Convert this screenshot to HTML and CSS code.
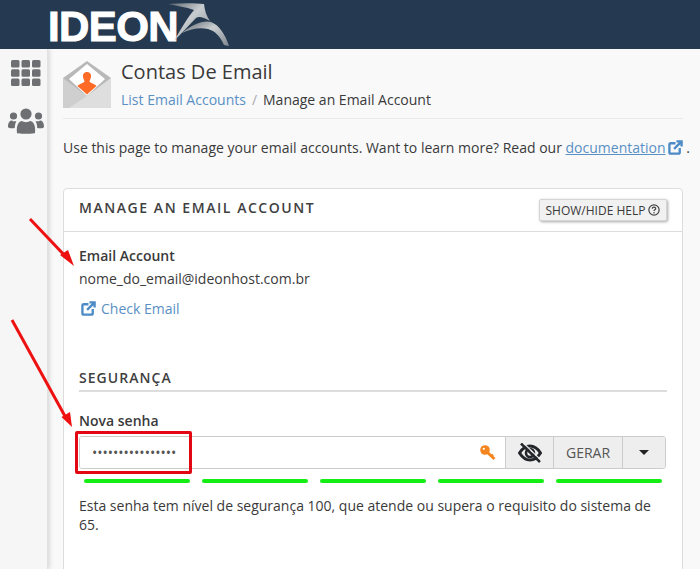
FILE: index.html
```html
<!DOCTYPE html>
<html lang="pt">
<head>
<meta charset="utf-8">
<title>Contas De Email</title>
<link rel="stylesheet" href="styles.css">
</head>
<body>
<header class="topbar">
  <div class="logo">
    <span class="logo-text">IDEON</span>
    <svg class="logo-bird" viewBox="0 0 66 46" width="66" height="46" aria-hidden="true">
      <defs>
        <linearGradient id="wing" x1="0" y1="0" x2="1" y2="1">
          <stop offset="0" stop-color="#59636c"/>
          <stop offset="0.45" stop-color="#c9cdd0"/>
          <stop offset="1" stop-color="#7f888f"/>
        </linearGradient>
      </defs>
      <path fill="url(#wing)" d="M1 2 C14 1 28 1 37 2 C38 9 39 13 43 19 C36 15 32 14 29 16 C22 23 15 31 7 39 C15 25 21 15 27 8 C19 5 10 4 1 2Z"/>
      <path fill="url(#wing)" d="M15 31 C26 22 36 18 44 20 C52 23 58 32 62 44 L57 43 C53 34 48 29 41 27 C32 25 24 27 15 31Z"/>
    </svg>
  </div>
</header>
<div class="shell">
  <nav class="rail">
    <svg class="rail-grid" viewBox="0 0 30 26" width="30" height="26" aria-hidden="true">
      <g fill="#6d6f72">
        <rect x="0" y="0" width="8.5" height="7.5" rx="1.5"/><rect x="10.5" y="0" width="8.5" height="7.5" rx="1.5"/><rect x="21" y="0" width="8.5" height="7.5" rx="1.5"/>
        <rect x="0" y="9.2" width="8.5" height="7.5" rx="1.5"/><rect x="10.5" y="9.2" width="8.5" height="7.5" rx="1.5"/><rect x="21" y="9.2" width="8.5" height="7.5" rx="1.5"/>
        <rect x="0" y="18.4" width="8.5" height="7.5" rx="1.5"/><rect x="10.5" y="18.4" width="8.5" height="7.5" rx="1.5"/><rect x="21" y="18.4" width="8.5" height="7.5" rx="1.5"/>
      </g>
    </svg>
    <svg class="rail-users" viewBox="0 0 36 26" width="36" height="26" aria-hidden="true">
      <g fill="#6d6f72">
        <circle cx="18" cy="6" r="5.6"/>
        <circle cx="5.5" cy="8" r="3.6"/>
        <circle cx="30.5" cy="8" r="3.6"/>
        <path d="M9 25 C8 17 11 13 14 13 C16 14.5 20 14.5 22 13 C25 13 28 17 27 25 C26 26 10 26 9 25Z"/>
        <path d="M0 19 C0 14 2 12.5 4 12.5 C5 13.5 7 13.5 8.5 13 C7.4 15 6.8 17 6.8 20 C4 20.5 0.5 20.5 0 19Z"/>
        <path d="M36 19 C36 14 34 12.5 32 12.5 C31 13.5 29 13.5 27.5 13 C28.6 15 29.2 17 29.2 20 C32 20.5 35.5 20.5 36 19Z"/>
      </g>
    </svg>
  </nav>
  <main class="content">
    <div class="page-head">
      <svg class="mail-icon" viewBox="0 0 48 48" width="48" height="48" aria-hidden="true">
        <path fill="#b8b8b8" d="M0 17 L24 0 L48 17 L48 46 Q48 47 46 47 L2 47 Q0 47 0 46Z"/>
        <path fill="#fff" d="M6 18 L24 3 L42 18 L24 35Z"/>
        <path fill="#ff6a26" d="M24 11 C27 11 28.500 13.500 28 16 C27.700 18 26.500 19.500 26.500 20.500 C27 22 32 23 33.500 25 L24 33.500 L14.500 25 C16 23 21 22 21.500 20.500 C21.500 19.500 20.300 18 20 16 C19.500 13.500 21 11 24 11Z"/>
        <path fill="#cfcfcf" d="M0 17 L24 35 L48 17 L48 46 Q48 47 46 47 L2 47 Q0 47 0 46Z"/>
        <path fill="#dedede" d="M48 17 L48 46 Q48 47 46 47 L6 47 L24 35Z"/>
      </svg>
      <div class="head-text">
        <h1 class="page-title">Contas De Email</h1>
        <div class="crumbs"><a class="link" href="#">List Email Accounts</a><span class="crumb-sep">/</span><span>Manage an Email Account</span></div>
      </div>
    </div>
    <hr class="head-rule">
    <p class="intro">Use this page to manage your email accounts. Want to learn more? Read our <a class="link underlined" href="#">documentation</a><svg class="ext ext-doc" viewBox="0 0 16 16" width="15" height="15" aria-hidden="true"><path class="ext-path" d="M8 3.500H3 Q1.500 3.500 1.500 5V13 Q1.500 14.500 3 14.500H11 Q12.500 14.500 12.500 13V8.500"/><path class="ext-path" d="M6.500 9.500L14 2M9 1.500H14.500V7"/></svg> .</p>
    <section class="panel">
      <div class="panel-head">
        <h2 class="panel-title">MANAGE AN EMAIL ACCOUNT</h2>
        <button class="help-btn" type="button">SHOW/HIDE HELP
          <svg viewBox="0 0 14 14" width="12" height="12" aria-hidden="true"><circle cx="7" cy="7" r="6" fill="none" stroke="#444" stroke-width="1.400"/><path d="M5 5.500C5 4.300 6 3.700 7 3.700S9 4.300 9 5.400C9 6.800 7 6.800 7 8.300" fill="none" stroke="#444" stroke-width="1.400"/><circle cx="7" cy="10.200" r="0.900" fill="#444"/></svg>
        </button>
      </div>
      <div class="panel-body">
        <div class="field-label">Email Account</div>
        <div class="account">nome_do_email@ideonhost.com.br</div>
        <a class="link check" href="#"><svg class="ext" viewBox="0 0 16 16" width="15" height="15" aria-hidden="true"><path class="ext-path" d="M8 3.500H3 Q1.500 3.500 1.500 5V13 Q1.500 14.500 3 14.500H11 Q12.500 14.500 12.500 13V8.500"/><path class="ext-path" d="M6.500 9.500L14 2M9 1.500H14.500V7"/></svg>Check Email</a>
        <h3 class="section-title">SEGURANÇA</h3>
        <label class="field-label pw-label" for="pw">Nova senha</label>
        <div class="pw-group">
          <div class="pw-input">
            <span class="pw-dots" id="pw">••••••••••••••••</span>
            <svg class="key" viewBox="0 0 16 16" width="16" height="16" aria-hidden="true"><circle cx="5" cy="5" r="4.800" fill="#f5861f"/><circle cx="3.800" cy="3.800" r="1.100" fill="#fff"/><path d="M7.500 7.500L14.500 14" stroke="#f5861f" stroke-width="3" fill="none"/><path d="M11 11.500L13 9.500" stroke="#f5861f" stroke-width="2.400" fill="none"/></svg>
          </div>
          <button class="addon addon-eye" type="button" aria-label="show">
            <svg viewBox="0 0 24 20" width="24" height="20" aria-hidden="true"><path d="M1.500 10C5 4.500 8.500 3 12 3S19 4.500 22.500 10C19 15.500 15.500 17 12 17S5 15.500 1.500 10Z" fill="none" stroke="#23272b" stroke-width="3"/><circle cx="12" cy="10" r="4" fill="none" stroke="#23272b" stroke-width="2.600"/><path d="M3 0.500L22 19" stroke="#23272b" stroke-width="2.600"/><path d="M5.500 0L24 18" stroke="#eee" stroke-width="1.200"/></svg>
          </button>
          <button class="addon addon-gen" type="button">GERAR</button>
          <button class="addon addon-caret" type="button" aria-label="menu"><span class="caret"></span></button>
        </div>
        <div class="meter">
          <span class="meter-bar"></span><span class="meter-bar"></span><span class="meter-bar"></span><span class="meter-bar"></span><span class="meter-bar"></span>
        </div>
        <p class="strength">Esta senha tem nível de segurança 100, que atende ou supera o requisito do sistema de 65.</p>
      </div>
    </section>
  </main>
</div>
<div class="red-box"></div>
<svg class="arrows" viewBox="0 0 700 569" width="700" height="569" aria-hidden="true">
  <path d="M30 219L68 259" stroke="#ee1111" stroke-width="3" fill="none"/>
  <path d="M74 266L60 255L68 250Z" fill="#ee1111"/>
  <path d="M12 320L66 418" stroke="#ee1111" stroke-width="3" fill="none"/>
  <path d="M72 427L61.500 417L70 412Z" fill="#ee1111"/>
</svg>
</body>
</html>
```
FILE: styles.css
```css
* { box-sizing: border-box; }
html, body { margin: 0; padding: 0; height: 569px; overflow: hidden; }
body {
  font-family: "Open Sans", "Liberation Sans", sans-serif;
  font-size: 14px;
  line-height: 20px;
  color: #3a3a3a;
  background: #f9f9fa;
  position: relative;
}
.topbar {
  height: 49px;
  background: #253a50;
  position: relative;
  z-index: 2;
  overflow: hidden;
}
.logo { display: flex; align-items: flex-start; padding-left: 48px; }
.logo-text {
  font-family: "Liberation Sans", Arial, sans-serif;
  font-weight: 700;
  font-size: 42px;
  line-height: 49px;
  letter-spacing: -0.600px;
  color: #fff;
  margin-top: 2px;
  -webkit-text-stroke: 1px #fff;
}
.logo-bird { margin-left: -11px; margin-top: 2px; }
.shell { display: flex; height: 520px; }
.rail {
  width: 48px;
  flex: none;
  background: #f6f6f7;
  border-right: 1px solid #e2e2e3;
  box-shadow: 2px 0 4px rgba(0,0,0,0.12);
  display: flex;
  flex-direction: column;
  align-items: center;
  padding-top: 11px;
}
.rail-grid { margin-left: 4px; }
.rail-users { margin-top: 22px; margin-left: 4px; }
.content { flex: 1; padding: 10px 17px 0 15px; min-width: 0; }
.page-head { display: flex; gap: 10px; height: 49px; }
.mail-icon { flex: none; margin-top: 2px; }
.page-title {
  margin: 0;
  font-size: 20px;
  font-weight: 400;
  line-height: 26px;
  color: #3a3a3a;
}
.crumbs { margin-top: 5px; line-height: 20px; color: #3a3a3a; }
.crumb-sep { color: #aaa; margin: 0 6px 0 6px; }
.link { color: #5a90c4; text-decoration: none; }
.underlined { text-decoration: underline; }
.head-rule { margin: 10px 0 0; border: 0; border-top: 1px solid #eaeaeb; }
.intro { margin: 19px 0 0; height: 20px; white-space: nowrap; }
.ext { vertical-align: -2px; }
.ext-doc { margin-left: 2px; }
.ext-path { fill: none; stroke: #4d8bc6; stroke-width: 2.500; }
.panel {
  margin-top: 30px;
  height: 400px;
  background: #fff;
  border: 1px solid #ddd;
  border-radius: 4px 4px 0 0;
}
.panel-head {
  height: 43px;
  border-bottom: 1px solid #ddd;
  display: flex;
  justify-content: space-between;
  padding: 0 15px;
}
.panel-title {
  margin: 10px 0 0;
  font-size: 14px;
  font-weight: 600;
  line-height: 18px;
  letter-spacing: 1.550px;
  color: #3f3f3f;
}
.help-btn {
  margin-top: 10px;
  height: 22px;
  width: 128px;
  padding: 0;
  font-family: inherit;
  font-size: 12px;
  color: #3a3a3a;
  background: #f1f1f1;
  border: 1px solid #d5d5d5;
  border-radius: 2px;
  box-shadow: 1px 1px 3px rgba(0,0,0,0.35);
  display: flex;
  align-items: center;
  justify-content: center;
  gap: 3px;
  white-space: nowrap;
}
.panel-body { padding: 14px 15px 0; }
.field-label { display: block; font-weight: 600; line-height: 20px; color: #3a3a3a; }
.account { margin-top: 3px; line-height: 20px; }
.check { display: block; margin-top: 10px; margin-left: 2px; line-height: 20px; }
.check .ext { margin-right: 5px; }
.section-title {
  margin: 50px 0 0;
  height: 23px;
  font-size: 14px;
  font-weight: 600;
  line-height: 18px;
  letter-spacing: 1.050px;
  color: #3f3f3f;
  border-bottom: 2px solid #ddd;
}
.pw-label { margin-top: 19px; }
.pw-group {
  margin-top: 5px;
  height: 33px;
  margin-right: 1px;
  display: flex;
  border: 1px solid #ccc;
  border-radius: 3px;
  overflow: hidden;
}
.pw-input {
  flex: 1;
  background: #fff;
  display: flex;
  align-items: center;
  justify-content: space-between;
  padding: 0 9px 0 12px;
}
.pw-dots { font-size: 14px; letter-spacing: 0; color: #555; }
.addon {
  height: 100%;
  padding: 0;
  border: 0;
  border-left: 1px solid #ccc;
  background: #eee;
  font-family: inherit;
  font-size: 14px;
  color: #555;
  display: flex;
  align-items: center;
  justify-content: center;
}
.addon-eye { width: 48px; }
.addon-gen { width: 69px; }
.addon-caret { width: 43px; }
.caret {
  width: 0;
  height: 0;
  border-left: 5px solid transparent;
  border-right: 5px solid transparent;
  border-top: 5px solid #222;
}
.meter {
  margin-top: 10px;
  padding-left: 5px;
  display: flex;
  gap: 12px;
  width: 587px;
}
.meter-bar { width: 106px; height: 4px; background: #14ee14; border-radius: 2px; }
.strength { margin: 13px 0 0; line-height: 19px; }
.red-box {
  position: absolute;
  left: 75px;
  top: 431px;
  width: 117px;
  height: 43px;
  border: 3px solid #e30613;
  border-radius: 2px;
}
.arrows { position: absolute; left: 0; top: 0; pointer-events: none; }
```
